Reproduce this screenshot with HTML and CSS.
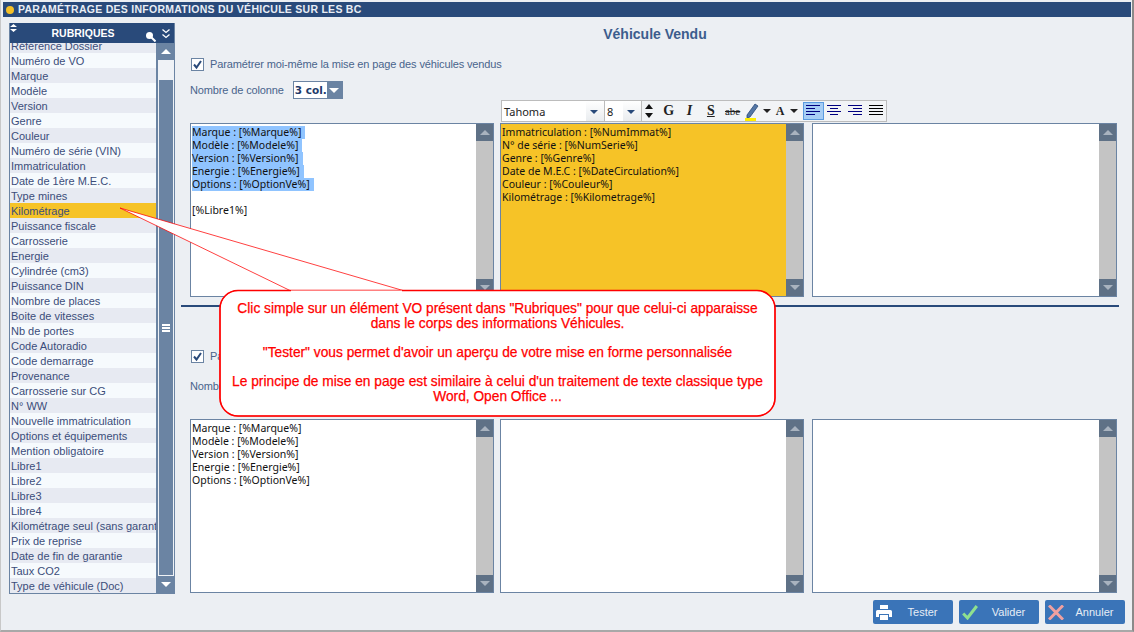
FILE: index.html
```html
<!DOCTYPE html>
<html lang="fr">
<head>
    <meta charset="UTF-8">
    <title>Paramétrage des informations du véhicule</title>
    <link rel="stylesheet" href="styles.css">
</head>
<body>
<div class="window">
    <div class="title-bar"><span class="title-dot"></span>PARAMÉTRAGE DES INFORMATIONS DU VÉHICULE SUR LES BC</div>
    <div class="main">
        <div class="rubriques">
            <div class="rub-head">
                <svg class="rub-sort" width="7" height="8" viewBox="0 0 7 8"><path d="M3.500 0 7 3H0zM3.500 8 0 5h7z" fill="#fff"/></svg>
                RUBRIQUES
                <svg class="rub-search" width="10" height="10" viewBox="0 0 10 10"><circle cx="3.500" cy="3.500" r="3.500" fill="#fff"/><path d="M5.500 5.500l4 4" stroke="#fff" stroke-width="2"/></svg>
                <svg class="rub-collapse" width="8" height="10" viewBox="0 0 8 10"><path d="M.5 .5l3.500 3 3.500-3M.5 5.500l3.500 3 3.500-3" fill="none" stroke="#fff" stroke-width="1.300"/></svg>
            </div>
            <div class="rub-body">
                <ul class="rub-list">
                    <li>Référence Dossier</li>
                    <li>Numéro de VO</li>
                    <li>Marque</li>
                    <li>Modèle</li>
                    <li>Version</li>
                    <li>Genre</li>
                    <li>Couleur</li>
                    <li>Numéro de série (VIN)</li>
                    <li>Immatriculation</li>
                    <li>Date de 1ère M.E.C.</li>
                    <li>Type mines</li>
                    <li class="active">Kilométrage</li>
                    <li>Puissance fiscale</li>
                    <li>Carrosserie</li>
                    <li>Energie</li>
                    <li>Cylindrée (cm3)</li>
                    <li>Puissance DIN</li>
                    <li>Nombre de places</li>
                    <li>Boite de vitesses</li>
                    <li>Nb de portes</li>
                    <li>Code Autoradio</li>
                    <li>Code demarrage</li>
                    <li>Provenance</li>
                    <li>Carrosserie sur CG</li>
                    <li>N° WW</li>
                    <li>Nouvelle immatriculation</li>
                    <li>Options et équipements</li>
                    <li>Mention obligatoire</li>
                    <li>Libre1</li>
                    <li>Libre2</li>
                    <li>Libre3</li>
                    <li>Libre4</li>
                    <li>Kilométrage seul (sans garantie)</li>
                    <li>Prix de reprise</li>
                    <li>Date de fin de garantie</li>
                    <li>Taux CO2</li>
                    <li>Type de véhicule (Doc)</li>
                </ul>
                <div class="rub-scroll">
                    <div class="rub-btn"><span class="arrow-up"></span></div>
                    <div class="rub-track"></div>
                    <div class="rub-thumb"><span class="grip"></span></div>
                    <div class="rub-btn"><span class="arrow-down"></span></div>
                </div>
            </div>
        </div>
        <div class="content">
            <h1 class="section-title">Véhicule Vendu</h1>
            <label class="check-row"><span class="checkbox"><svg width="11" height="11" viewBox="0 0 11 11"><path d="M2 5.500l2.500 3L9 2" fill="none" stroke="#2a4a7a" stroke-width="2"/></svg></span>Paramétrer moi-même la mise en page des véhicules vendus</label>
            <div class="col-row">
                <span>Nombre de colonne</span>
                <div class="combo"><span class="combo-val">3 col.</span><span class="combo-btn"><span class="arrow-down"></span></span></div>
            </div>
            <div class="toolbar">
                <div class="tb-select tb-font"><span>Tahoma</span><span class="tb-drop"></span></div>
                <div class="tb-select tb-size"><span>8</span><span class="tb-drop"></span></div>
                <div class="tb-spin"><span class="spin-up"></span><span class="spin-down"></span></div>
                <div class="tb-btn tb-g">G</div>
                <div class="tb-btn tb-i">I</div>
                <div class="tb-btn tb-s">S</div>
                <div class="tb-btn tb-abe">abe</div>
                <div class="tb-btn tb-pen">
                    <svg width="16" height="19" viewBox="0 0 16 19"><path d="M3 13 11 2l3 2-8 11-3 1z" fill="#5577a5" stroke="#2a4a7a" stroke-width=".8"/><rect x="1" y="16" width="11" height="3" fill="#ffee00"/></svg>
                    <span class="tb-drop-sm"></span>
                </div>
                <div class="tb-btn tb-a">A<span class="tb-drop-sm"></span></div>
                <div class="tb-btn tb-align active"><svg width="14" height="12" viewBox="0 0 14 12"><path d="M0 .5h14M0 3.500h9M0 6.500h14M0 9.500h9" stroke="#000080"/></svg></div>
                <div class="tb-btn tb-align"><svg width="14" height="12" viewBox="0 0 14 12"><path d="M0 .5h14M3 3.500h8M0 6.500h14M3 9.500h8" stroke="#000080"/></svg></div>
                <div class="tb-btn tb-align"><svg width="14" height="12" viewBox="0 0 14 12"><path d="M0 .5h14M5 3.500h9M0 6.500h14M5 9.500h9" stroke="#000080"/></svg></div>
                <div class="tb-btn tb-align"><svg width="14" height="12" viewBox="0 0 14 12"><path d="M0 .5h14M0 3.500h14M0 6.500h14M0 9.500h14" stroke="#000"/></svg></div>
            </div>
            <div class="editors">
                <div class="editor">
                    <div class="editor-text">
                        <mark>Marque : [%Marque%]</mark><br>
                        <mark>Modèle : [%Modele%]</mark><br>
                        <mark>Version : [%Version%]</mark><br>
                        <mark>Energie : [%Energie%]</mark><br>
                        <mark>Options : [%OptionVe%]</mark><br>
                        <br>
                        [%Libre1%]
                    </div>
                    <div class="ed-scroll"><span class="ed-btn"><span class="arrow-up"></span></span><span class="ed-btn"><span class="arrow-down"></span></span></div>
                </div>
                <div class="editor editor-hl">
                    <div class="editor-text">
                        Immatriculation : [%NumImmat%]<br>
                        N° de série : [%NumSerie%]<br>
                        Genre : [%Genre%]<br>
                        Date de M.E.C : [%DateCirculation%]<br>
                        Couleur : [%Couleur%]<br>
                        Kilométrage : [%Kilometrage%]
                    </div>
                    <div class="ed-scroll"><span class="ed-btn"><span class="arrow-up"></span></span><span class="ed-btn"><span class="arrow-down"></span></span></div>
                </div>
                <div class="editor">
                    <div class="editor-text"></div>
                    <div class="ed-scroll"><span class="ed-btn"><span class="arrow-up"></span></span><span class="ed-btn"><span class="arrow-down"></span></span></div>
                </div>
            </div>
            <div class="separator"></div>
            <label class="check-row check-row-2"><span class="checkbox"><svg width="11" height="11" viewBox="0 0 11 11"><path d="M2 5.500l2.500 3L9 2" fill="none" stroke="#2a4a7a" stroke-width="2"/></svg></span>Paramétrer</label>
            <div class="col-row col-row-2"><span>Nombre de colonne</span></div>
            <div class="editors">
                <div class="editor">
                    <div class="editor-text">
                        Marque : [%Marque%]<br>
                        Modèle : [%Modele%]<br>
                        Version : [%Version%]<br>
                        Energie : [%Energie%]<br>
                        Options : [%OptionVe%]
                    </div>
                    <div class="ed-scroll"><span class="ed-btn"><span class="arrow-up"></span></span><span class="ed-btn"><span class="arrow-down"></span></span></div>
                </div>
                <div class="editor">
                    <div class="editor-text"></div>
                    <div class="ed-scroll"><span class="ed-btn"><span class="arrow-up"></span></span><span class="ed-btn"><span class="arrow-down"></span></span></div>
                </div>
                <div class="editor">
                    <div class="editor-text"></div>
                    <div class="ed-scroll"><span class="ed-btn"><span class="arrow-up"></span></span><span class="ed-btn"><span class="arrow-down"></span></span></div>
                </div>
            </div>
            <div class="actions">
                <div class="action">
                    <svg width="16" height="15" viewBox="0 0 16 15"><path d="M4 0h8v4H4zM1.500 5h13A1.500 1.500 0 0 1 16 6.500V12h-3V9H3v3H0V6.500A1.500 1.500 0 0 1 1.500 5z" fill="#fff"/><path d="M4 10h8v5H4z" fill="#fff"/></svg>
                    <span>Tester</span>
                </div>
                <div class="action">
                    <svg width="16" height="15" viewBox="0 0 16 15"><path d="M1.200 8.500 5.500 13 14.800 1" fill="none" stroke="#8fe08f" stroke-width="3"/></svg>
                    <span>Valider</span>
                </div>
                <div class="action">
                    <svg width="16" height="15" viewBox="0 0 16 15"><path d="M1 .5 15 14.500M15 .5 1 14.500" fill="none" stroke="#f0a0a0" stroke-width="3"/></svg>
                    <span>Annuler</span>
                </div>
            </div>
        </div>
    </div>
    <svg class="callout-shape" width="1134" height="632" viewBox="0 0 1134 632"><path d="M290 290.500 120 208 403 290.500H757a18 18 0 0 1 18 18V398a18 18 0 0 1-18 18H238a18 18 0 0 1-18-18V308.500a18 18 0 0 1 18-18z" fill="#fff" stroke="#f00" stroke-opacity=".75"/><rect x="220" y="290.500" width="555" height="125.500" rx="18" fill="none" stroke="#f00" stroke-width="1.600"/><path d="M291 291.500H402" stroke="#fff" stroke-width="2"/></svg>
    <div class="callout-text">
        Clic simple sur un élément VO présent dans "Rubriques" pour que celui-ci apparaisse<br>
        dans le corps des informations Véhicules.<br>
        <br>
        "Tester" vous permet d'avoir un aperçu de votre mise en forme personnalisée<br>
        <br>
        Le principe de mise en page est similaire à celui d'un traitement de texte classique type<br>
        Word, Open Office ...
    </div>
</div>
</body>
</html>
```
FILE: styles.css
```css
*{
    margin:0;padding:0;
    box-sizing:border-box;
}
html,body{
    width:1134px;
    height:632px;
    overflow:hidden;
}
body{
    font-family:"Liberation Sans",Arial,sans-serif;
    font-size:11px;
    color:#3f5378;
    background:#eceff3;
}
.window{
    position:relative;
    width:1134px;
    height:632px;
    padding:2px 1px 0 2px;
    border-left:1px solid #c8c8c8;
    border-right:2px solid #8a8a8a;
    border-bottom:2px solid #a8a8a8;
    display:flex;
    flex-direction:column;
}
.title-bar{
    height:15px;
    background:#294a7a;
    color:#e8edf4;
    font-weight:bold;
    font-size:10.500px;
    letter-spacing:.27px;
    line-height:15px;
    display:flex;
    align-items:center;
    padding-left:3px;
    gap:4px;
}
.title-dot{
    width:8px;
    height:8px;
    border-radius:50%;
    background:#f5c026;
}
.main{
    flex:1;
    display:flex;
    padding:6px 0 0 6px;
}

/* rubriques */
.rubriques{
    width:166px;
    height:571px;
    border:1px solid #6b84a3;
    border-top:0;
    display:flex;
    flex-direction:column;
}
.rub-head{
    position:relative;
    height:20px;
    background:#294a7a;
    color:#fff;
    font-weight:bold;
    font-size:10.500px;
    display:flex;
    align-items:center;
    justify-content:center;
    padding-right:18px;
}
.rub-sort{position:absolute;left:0;top:1px}
.rub-search{position:absolute;left:136px;top:9px}
.rub-collapse{position:absolute;left:152px;top:6px}
.rub-body{
    flex:1;
    display:flex;
    min-height:0;
}
.rub-list{
    flex:1;
    list-style:none;
    overflow:hidden;
    background:#fff;
    min-width:0;
}
.rub-list li{
    height:15px;
    line-height:17px;
    padding:0 1px;
    white-space:nowrap;
    overflow:hidden;
    color:#3b4d7a;
}
.rub-list li:nth-child(even){background:#f6fafd}
.rub-list li:nth-child(odd){background:#e7eaf2}
.rub-list li:first-child{
    height:10px;
    line-height:7px;
}
.rub-list li.active{background:#f6c327}
.rub-scroll{
    width:18px;
    display:flex;
    flex-direction:column;
    background:#eff2f6;
    border-left:2px solid #6b84a3;
}
.rub-btn{
    height:17px;
    background:#6b84a3;
    display:flex;
    align-items:center;
    justify-content:center;
    flex:none;
}
.rub-track{
    height:19px;
    flex:none;
}
.rub-thumb{
    flex:1;
    background:#6b84a3;
    border:1px solid #eff2f6;
    display:flex;
    align-items:center;
    justify-content:center;
}
.grip{
    width:8px;
    height:8px;
    background:repeating-linear-gradient(#fff 0 2px,transparent 2px 3px);
}
.arrow-up{
    width:0;height:0;
    border-left:5px solid transparent;
    border-right:5px solid transparent;
    border-bottom:5px solid #fff;
}
.arrow-down{
    width:0;height:0;
    border-left:5px solid transparent;
    border-right:5px solid transparent;
    border-top:5px solid #fff;
}

/* right part */
.content{
    flex:1;
    padding-left:15px;
    display:flex;
    flex-direction:column;
    min-width:0;
}
.section-title{
    height:22px;
    margin-top:2px;
    text-align:center;
    font-size:14px;
    font-weight:bold;
    color:#3c5d8d;
    line-height:18px;
    width:930px;
}
.check-row{
    display:flex;
    align-items:center;
    gap:6px;
    height:14px;
    margin:10px 0 0 1px;
    color:#49648c;
    letter-spacing:-.13px;
}
.checkbox{
    width:13px;
    height:13px;
    border:1px solid #6b84a3;
    background:#fff;
    display:flex;
    align-items:center;
    justify-content:center;
    flex:none;
}
.col-row{
    display:flex;
    align-items:center;
    height:18px;
    margin-top:10px;
    color:#49648c;
    letter-spacing:-.13px;
    gap:9px;
}
.combo{
    display:flex;
    width:50px;
    height:18px;
    border:1px solid #6b84a3;
    background:#fff;
}
.combo-val{
    flex:1;
    font-family:"DejaVu Sans",sans-serif;
    font-weight:bold;
    font-size:10.500px;
    letter-spacing:0;
    color:#1f3a6a;
    line-height:16px;
    padding-left:1px;
    white-space:nowrap;
}
.combo-btn{
    width:15px;
    background:#6b84a3;
    display:flex;
    align-items:center;
    justify-content:center;
}

/* toolbar */
.toolbar{
    display:flex;
    width:386px;
    height:22px;
    margin:1px 0 1px 311px;
    border:1px solid #bcbcbc;
    background:#f2f4f6;
    color:#222;
    font-size:12px;
}
.tb-select{
    display:flex;
    align-items:center;
    background:#fff;
    border-right:1px solid #bcbcbc;
    padding-left:2px;
    font-family:"Noto Sans",sans-serif;
    font-size:11px;
    justify-content:space-between;
}
.tb-font{width:104px}
.tb-size{width:37px}
.tb-drop{
    width:18px;
    height:100%;
    background:linear-gradient(#fff,#e9ecef);
    position:relative;
}
.tb-drop::after{
    content:"";
    position:absolute;
    left:4px;top:9px;
    border-left:4px solid transparent;
    border-right:4px solid transparent;
    border-top:4px solid #294a7a;
}
.tb-spin{
    width:16px;
    display:flex;
    flex-direction:column;
    align-items:center;
    justify-content:center;
    gap:4px;
}
.spin-up{
    border-left:4px solid transparent;
    border-right:4px solid transparent;
    border-bottom:5px solid #111;
}
.spin-down{
    border-left:4px solid transparent;
    border-right:4px solid transparent;
    border-top:5px solid #111;
}
.tb-btn{
    width:21px;
    display:flex;
    align-items:center;
    justify-content:center;
    font-family:"Liberation Serif",serif;
    font-size:14px;
    color:#222;
}
.tb-g{font-weight:bold;margin-left:1px}
.tb-i{font-style:italic;font-weight:bold}
.tb-s{text-decoration:underline;font-weight:bold;width:22px}
.tb-abe{text-decoration:line-through;font-size:11px;width:22px}
.tb-pen{width:28px;gap:3px}
.tb-a{width:32px;gap:6px;font-weight:bold;font-size:12px}
.tb-drop-sm{
    border-left:4px solid transparent;
    border-right:4px solid transparent;
    border-top:4px solid #222;
}
.tb-align{width:21px;margin:1px 0}
.tb-align.active{
    background:#a6cdf5;
    border:1px solid #5b9be0;
}

/* editors */
.editors{
    display:grid;
    grid-template-columns:304px 304px 305px;
    column-gap:6px;
    height:174px;
}
.editors .editor:last-child{margin-left:2px;margin-right:-2px}
.editor{
    display:flex;
    border:1px solid #6b84a3;
    background:#fff;
    min-width:0;
}
.editor-hl{background:#f6c327}
.editor-text{
    flex:1;
    padding:2px 0 0 1px;
    font-family:"Noto Sans",sans-serif;
    font-size:10.500px;
    line-height:13px;
    color:#111;
    white-space:nowrap;
    overflow:hidden;
}
.editor-text mark{
    display:inline-block;
    height:13px;
    padding-right:4px;
    background:#90c4ff;
    color:#111;
}
.ed-scroll{
    width:17px;
    background:#c4c4c4;
    display:flex;
    flex-direction:column;
    justify-content:space-between;
}
.ed-btn{
    height:17px;
    background:#5f7186;
    display:flex;
    align-items:center;
    justify-content:center;
}
.ed-btn .arrow-up{border-bottom-color:#a9b3bf}
.ed-btn .arrow-down{border-top-color:#a9b3bf}
.separator{
    height:2px;
    background:#294a7a;
    margin:8px 0 0 -9px;
    width:938px;
}
.check-row-2{margin-top:42px}
.col-row-2{margin-top:14px}
.col-row-2 + .editors{margin-top:24px}

.actions{
    display:flex;
    justify-content:flex-end;
    gap:6px;
    margin-top:7px;
    padding-right:6px;
}
.action{
    width:80px;
    height:24px;
    background:#3a74b8;
    border-radius:2px;
    color:#e6edf6;
    display:flex;
    align-items:center;
    padding-left:3px;
}
.action span{
    flex:1;
    text-align:center;
}

/* callout */
.callout-shape{
    position:absolute;
    left:-1px;
    top:0;
}
.callout-text{
    position:absolute;
    left:218px;
    top:302px;
    width:557px;
    text-align:center;
    color:#f00;
    font-size:13.750px;
    -webkit-text-stroke:.25px #f00;
    line-height:14.600px;
    white-space:nowrap;
}
```
